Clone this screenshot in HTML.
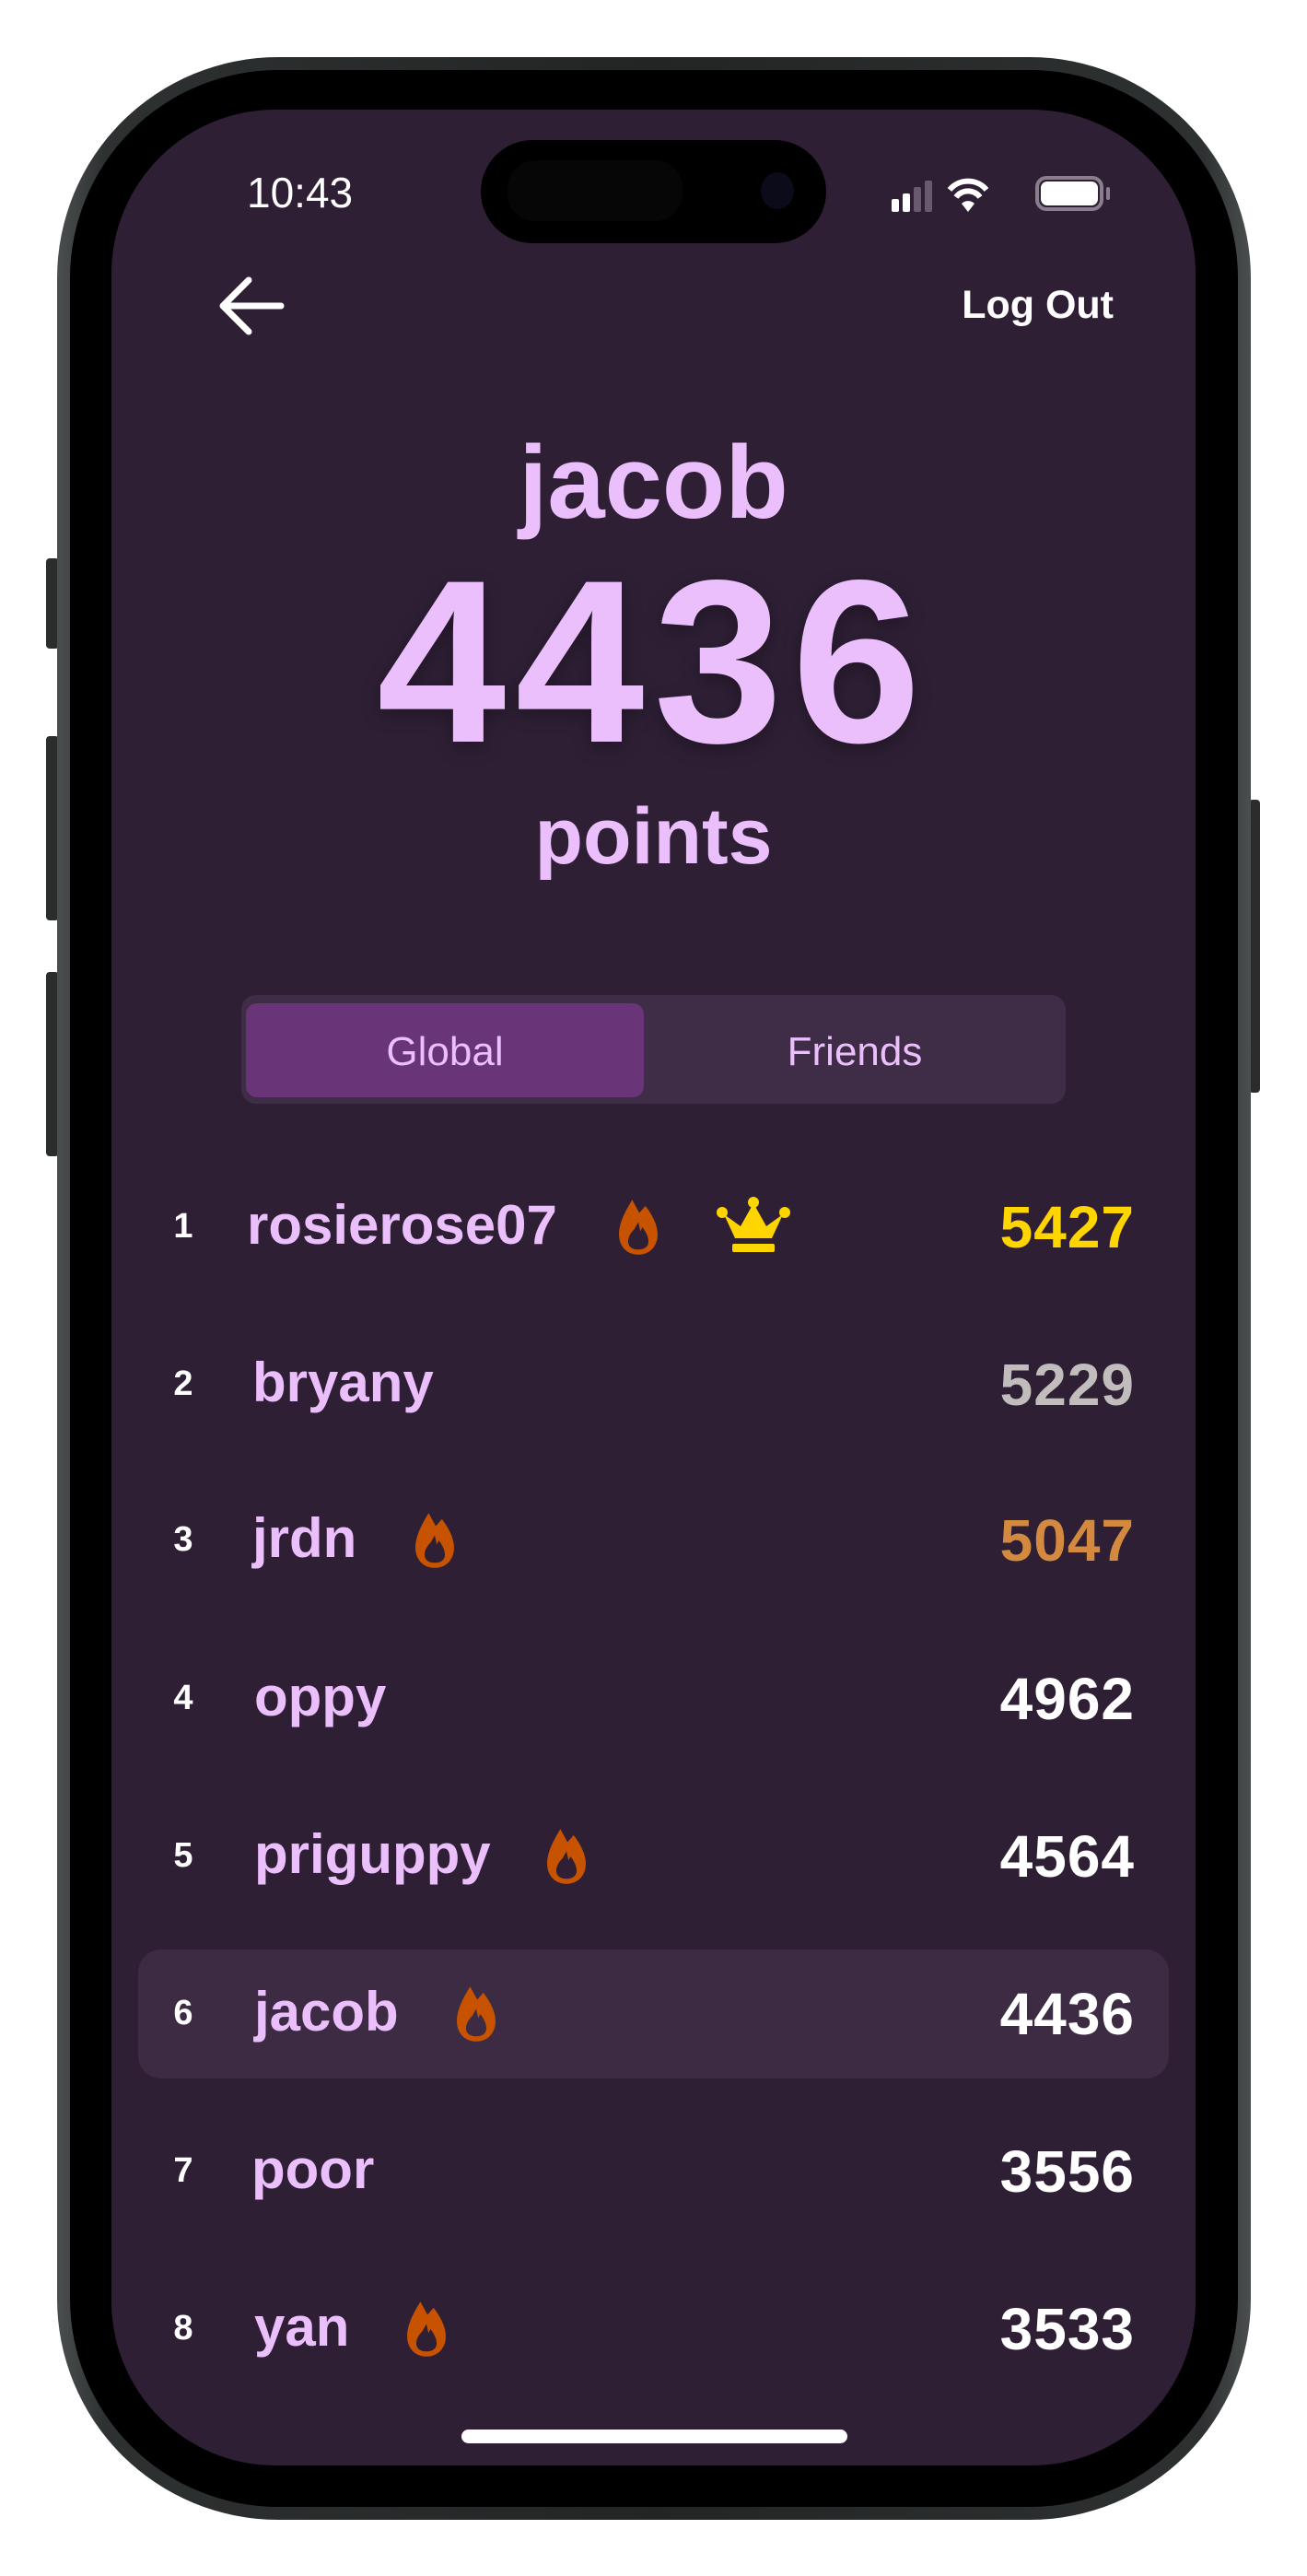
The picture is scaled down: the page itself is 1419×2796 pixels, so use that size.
<!DOCTYPE html>
<html><head><meta charset="utf-8"><style>
*{margin:0;padding:0;box-sizing:border-box}
html,body{width:1419px;height:2796px;background:#fff;overflow:hidden;font-family:"Liberation Sans",sans-serif}
.abs{position:absolute}
.frame{left:62px;top:62px;width:1296px;height:2673px;border-radius:240px;background:linear-gradient(90deg,#4a4e4e,#2e3131 4%,#232525 50%,#2e3131 96%,#4a4e4e);}
.bezel{left:76px;top:76px;width:1268px;height:2645px;border-radius:226px;background:#000;}
.screen{left:121px;top:119px;width:1177px;height:2557px;border-radius:178px;background:#2e1f35;overflow:hidden}
.btn{background:#2b2d2d;border-radius:4px}
.t{position:absolute;white-space:nowrap;font-weight:bold}
.name{color:#ebbefc;font-size:60px;top:0}
.rank{color:#fff;font-size:38px}
</style></head><body>
<div class="abs btn" style="left:50px;top:606px;width:14px;height:98px"></div>
<div class="abs btn" style="left:50px;top:799px;width:14px;height:200px"></div>
<div class="abs btn" style="left:50px;top:1055px;width:14px;height:200px"></div>
<div class="abs btn" style="left:1356px;top:868px;width:12px;height:318px"></div>
<div class="abs frame"></div>
<div class="abs bezel"></div>
<div class="abs screen">
  <div class="abs" style="left:401px;top:33px;width:375px;height:112px;border-radius:56px;background:#000"></div>
  <div class="abs" style="left:430px;top:55px;width:190px;height:66px;border-radius:30px;background:#060606"></div>
  <div class="abs" style="left:705px;top:68px;width:36px;height:40px;border-radius:50%;background:#0b0b1a"></div>
  <div class="t" style="left:147px;top:63px;font-size:46px;color:#fff;font-weight:normal">10:43</div>
  <svg class="abs" style="left:843px;top:67px" width="160" height="50" viewBox="0 0 160 50">
    <rect x="4" y="30" width="8" height="14" rx="2" fill="#fff"/>
    <rect x="16" y="24" width="8" height="20" rx="2" fill="#fff"/>
    <rect x="28" y="17" width="8" height="27" rx="2" fill="#6a5a6f"/>
    <rect x="40" y="10" width="8" height="34" rx="2" fill="#6a5a6f"/>
    <path d="M67 20 A26 26 0 0 1 107 20" stroke="#fff" stroke-width="6" fill="none"/>
    <path d="M74 28 A16 16 0 0 1 100 28" stroke="#fff" stroke-width="6" fill="none"/>
    <path d="M80 35 L87 44 L94 35 A10 10 0 0 0 80 35Z" fill="#fff"/>
  </svg>
  <div class="abs" style="left:1003px;top:72px;width:74px;height:38px;border:4px solid #8a7d8e;border-radius:12px"></div>
  <div class="abs" style="left:1009px;top:78px;width:62px;height:26px;background:#fff;border-radius:7px"></div>
  <div class="abs" style="left:1080px;top:84px;width:4px;height:14px;background:#8a7d8e;border-radius:2px"></div>
  <svg class="abs" style="left:112px;top:178px" width="80" height="70" viewBox="0 0 80 70">
    <path d="M37 7 L9 35 L37 63 M9 35 L72 35" stroke="#fff" stroke-width="7" fill="none" stroke-linecap="round" stroke-linejoin="round"/>
  </svg>
  <div class="t" style="right:89px;top:188px;font-size:43px;color:#fff">Log Out</div>
  <div class="t" style="left:0;width:1177px;text-align:center;top:340px;font-size:112px;color:#ebbefc">jacob</div>
  <div class="t" style="left:0;width:1177px;text-align:center;top:455px;font-size:252px;color:#ebbefc;letter-spacing:10px;text-shadow:0 6px 20px rgba(0,0,0,.3)">4436</div>
  <div class="t" style="left:0;width:1177px;text-align:center;top:740px;font-size:86px;color:#ebbefc">points</div>
  <div class="abs" style="left:141px;top:961px;width:895px;height:118px;border-radius:16px;background:#3f2d48"></div>
  <div class="abs" style="left:146px;top:970px;width:432px;height:102px;border-radius:12px;background:#6a3478"></div>
  <div class="t" style="left:146px;width:432px;text-align:center;top:998px;font-size:44px;color:#ebbefc;font-weight:normal">Global</div>
  <div class="t" style="left:578px;width:458px;text-align:center;top:998px;font-size:44px;color:#ebbefc;font-weight:normal">Friends</div>
  <div class="abs" style="left:29px;top:1997px;width:1119px;height:140px;border-radius:25px;background:#3d2b44"></div>
  <div id="rows"></div>
</div>
<div class="abs" style="left:501px;top:2637px;width:419px;height:15px;border-radius:8px;background:#fff"></div>
<script>
var rows=[
[1,"rosierose07",5427,"#ffd500",693,true,268],
[2,"bryany",5229,"#c2bdbd",0,false,274],
[3,"jrdn",5047,"#d38a3f",472,false,274],
[4,"oppy",4962,"#fff",0,false,276],
[5,"priguppy",4564,"#fff",615,false,276],
[6,"jacob",4436,"#fff",517,false,276],
[7,"poor",3556,"#fff",0,false,273],
[8,"yan",3533,"#fff",463,false,276]];
var ys=[1332,1503,1672,1844,2015,2186,2357,2528],h="";
var flame='<path fill="#c75200" fill-rule="evenodd" d="M14 2 L21 15 L27 8 C34 17 39 27 39 36 C39 48 31 56 20 56 C9 56 1 48 1 36 C1 24 8 12 14 2Z M20 24 L16 31 C12 35 10 39 10 43 C10 48 14 51 20 51 C26 51 30 48 30 43 C30 38 27 33 24 29 L22 33 Z"/>';
rows.forEach(function(r,i){
 var y=ys[i]-119;
 h+='<div class="t rank" style="left:0;width:156px;text-align:center;top:'+(y-22)+'px">'+r[0]+'</div>';
 h+='<div class="t name" style="left:'+(r[6]-121)+'px;top:'+(y-37)+'px">'+r[1]+'</div>';
 h+='<div class="t" style="right:'+(1298-1232)+'px;top:'+(y-37)+'px;font-size:64px;letter-spacing:1px;color:'+r[3]+'">'+r[2]+'</div>';
 if(r[4]) h+='<svg class="abs" style="left:'+(r[4]-121-27)+'px;top:'+(y-32)+'px" width="54" height="64" viewBox="0 0 40 58">'+flame+'</svg>';
 if(r[5]) h+='<svg class="abs" style="left:'+(818-121-40)+'px;top:'+(y-34)+'px" width="80" height="66" viewBox="0 0 80 66"><path d="M8 20 L20 46 L60 46 L72 20 L54 33 L40 8 L26 33Z" fill="#ffd500"/><circle cx="6" cy="18" r="6" fill="#ffd500"/><circle cx="74" cy="18" r="6" fill="#ffd500"/><circle cx="40" cy="7" r="6" fill="#ffd500"/><rect x="17" y="52" width="46" height="9" rx="2" fill="#ffd500"/></svg>';
});
document.getElementById('rows').innerHTML=h;
</script>
</body></html>
